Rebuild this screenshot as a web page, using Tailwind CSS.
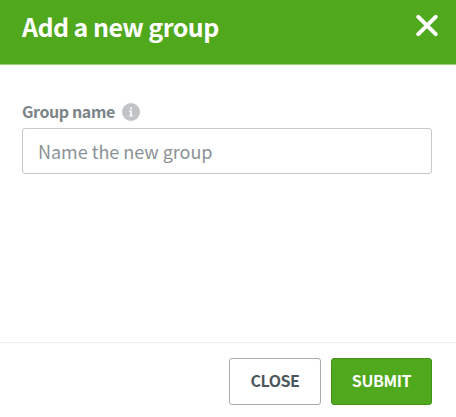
<!DOCTYPE html>
<html lang="en">
<head>
    <meta charset="UTF-8">
    <meta name="viewport" content="width=device-width, initial-scale=1.0">
    <title>Add a new group</title>
    <script src="https://cdn.jsdelivr.net/npm/@tailwindcss/browser@4"></script>
</head>
<body class="bg-white font-['Noto_Sans_CJK_SC','Open_Sans',sans-serif]">

    <div class="flex h-[417px] w-full flex-col overflow-hidden">
        <!-- Header -->
        <div class="flex h-[65px] shrink-0 items-start justify-between border-b border-[#9bcf7a] bg-[#50a81c] pl-[22px] pr-[17px]">
            <h1 class="pt-2 text-[25px] leading-9 font-bold tracking-[-0.57px] whitespace-nowrap text-white">Add a new group</h1>
            <button type="button" aria-label="Close" class="pt-3.5">
                <svg class="size-[23px]" viewBox="0 0 23 23" fill="none" stroke="#fff" stroke-width="4" stroke-linecap="round">
                    <path d="M2.3 2.8l17.4 17.4M19.7 2.8L2.3 20.2" />
                </svg>
            </button>
        </div>

        <!-- Form -->
        <div class="flex-1 pl-[22px] pt-[35px] pr-6">
            <div class="flex h-6 items-center gap-[7px]">
                <label for="group-name" class="-mt-0.5 text-base leading-6 font-bold tracking-[-0.4px] whitespace-nowrap text-[#7b8488]">Group name</label>
                <svg class="size-[18px]" viewBox="0 0 18 18">
                    <circle cx="9" cy="9" r="9" fill="#c0c4c6" />
                    <path d="M8 4.2h2v2H8zM7 7.6h3v4.6h1.2v1.3H6.8v-1.3H8V8.9H7z" fill="#f3f4f4" />
                </svg>
            </div>
            <input id="group-name" type="text" placeholder="Name the new group" class="mt-1 block h-[46px] w-full rounded-[3px] border border-[#c6c8c9] px-[15px] text-lg tracking-[-0.03px] placeholder:text-[#8b9295]">
        </div>

        <!-- Footer -->
        <div class="flex h-[75px] shrink-0 items-start justify-end gap-2.5 border-t border-[#eeeeee] pt-[15px] pr-6">
            <button type="button" class="h-[47px] w-[92px] rounded-[3px] border border-[#a7abad] pb-[3px] text-base font-bold tracking-[-0.5px] text-[#4c575c]">CLOSE</button>
            <button type="button" class="h-[47px] w-[101px] rounded-[3px] border border-[#43901a] bg-[#50a81c] pb-[3px] text-base font-bold tracking-[-0.4px] text-white">SUBMIT</button>
        </div>
    </div>

</body>
</html>
